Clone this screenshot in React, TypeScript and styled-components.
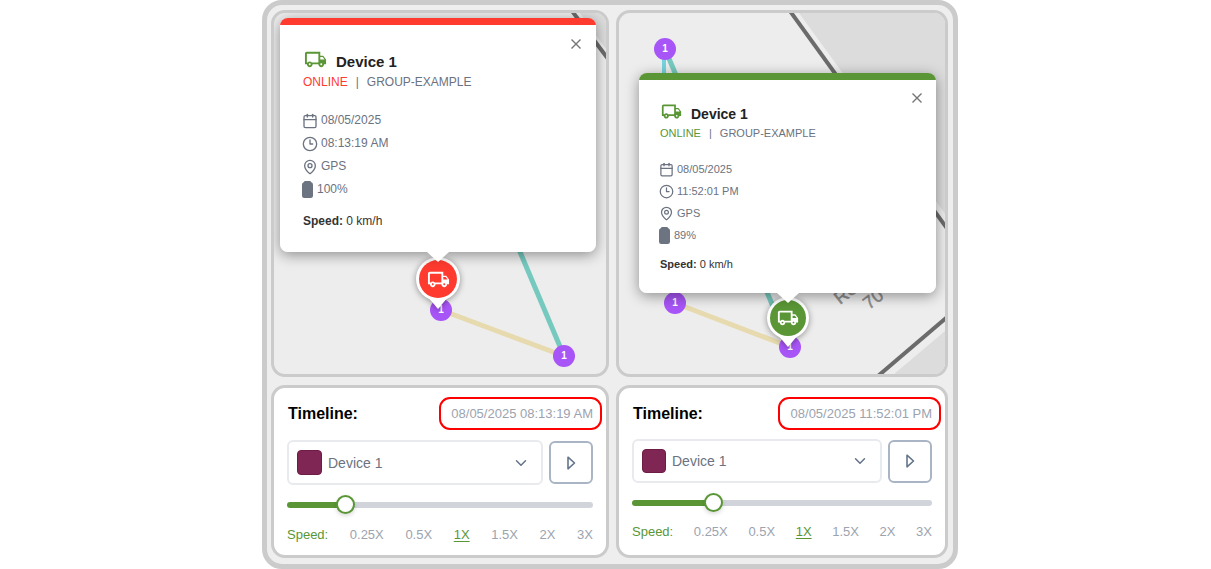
import React, { useState } from "react";
import styled, { createGlobalStyle, css } from "styled-components";
import { Calendar, ChevronDown, Clock3, MapPin } from "lucide-react";
import { MdOutlineLocalShipping } from "react-icons/md";

const RED = "#ff3b30";
const GREEN = "#5a9636";
const SLATE = "#6b7280";

const GlobalStyle = createGlobalStyle`
  * { box-sizing: border-box; }
  body {
    margin: 0;
    background: #fff;
    font-family: "Liberation Sans", Arial, sans-serif;
  }
  button, select { font-family: inherit; }
`;

const Page = styled.main`
  display: flex;
  justify-content: center;
  padding-left: 9px;
`;

const Frame = styled.div`
  flex: 1;
  max-width: 696px;
  display: grid;
  grid-template-columns: 338fr 332fr;
  gap: 8px 7px;
  padding: 5px 5px 6px 4px;
  background: #eeeeee;
  border: 5px solid #cbcbcb;
  border-radius: 20px;
`;

const card = css`
  border: 3px solid #cbcbcb;
  border-radius: 14px;
  overflow: hidden;
`;

const MapCard = styled.section`
  ${card}
  position: relative;
  min-height: 367px;
  background: #ededed;
`;

const MapArt = styled.svg`
  position: absolute;
  inset: 0;
  width: 100%;
  height: 100%;
`;

const Point = styled.span<{ $x: number; $y: number }>`
  position: absolute;
  left: ${(p) => p.$x - 11}px;
  top: ${(p) => p.$y - 11}px;
  width: 22px;
  height: 22px;
  border-radius: 50%;
  background: #a855f7;
  color: #fff;
  font-size: 10px;
  font-weight: 700;
  line-height: 21px;
  text-align: center;
`;

const PinBox = styled.div<{ $x: number; $y: number }>`
  position: absolute;
  left: ${(p) => p.$x - 30}px;
  top: ${(p) => p.$y - 30}px;
  width: 60px;
  height: 60px;
  display: grid;
  place-items: center;
  color: #fff;
  filter: drop-shadow(0 1px 3px rgba(0, 0, 0, 0.4));

  > * { grid-area: 1 / 1; }
`;

const Popup = styled.article<{ $x: number; $y: number; $w: number; $tip: number; $accent: string; $pad: string }>`
  position: absolute;
  left: ${(p) => p.$x}px;
  top: ${(p) => p.$y}px;
  width: ${(p) => p.$w}px;
  padding: ${(p) => p.$pad};
  border-radius: 8px;
  background: linear-gradient(${(p) => p.$accent} 7px, #fff 7px);
  box-shadow: 0 3px 14px rgba(0, 0, 0, 0.4);

  &::after {
    content: "";
    position: absolute;
    top: 100%;
    left: ${(p) => p.$tip - 11}px;
    border: 11px solid transparent;
    border-top: 10px solid #fff;
    border-bottom: 0;
  }
`;

const CloseButton = styled.button<{ $compact: boolean }>`
  position: absolute;
  top: ${(p) => (p.$compact ? 17 : 18)}px;
  right: ${(p) => (p.$compact ? 11 : 12)}px;
  width: 16px;
  height: 16px;
  padding: 0;
  display: grid;
  place-items: center;
  border: 0;
  background: none;
  color: #757575;
`;

const TitleRow = styled.header<{ $h: number }>`
  display: flex;
  gap: 9px;
  height: ${(p) => p.$h}px;
  padding-left: 1px;
  color: ${GREEN};
`;

const DeviceName = styled.h2<{ $size: number }>`
  align-self: flex-end;
  margin: 0;
  color: #222;
  font-size: ${(p) => p.$size}px;
  line-height: 18px;
`;

const Meta = styled.p<{ $size: number; $top: number }>`
  display: flex;
  gap: 8px;
  margin: ${(p) => p.$top}px 0 0;
  color: ${SLATE};
  font-size: ${(p) => p.$size}px;
  line-height: 16px;
`;

const Status = styled.span<{ $accent: string }>`
  color: ${(p) => p.$accent};
`;

const Details = styled.ul<{ $size: number; $row: number; $top: number }>`
  list-style: none;
  margin: ${(p) => p.$top}px 0 0 -1px;
  padding: 0;
  color: ${SLATE};
  font-size: ${(p) => p.$size}px;
  line-height: ${(p) => p.$row}px;
`;

const Detail = styled.li`
  display: flex;
  align-items: center;
  gap: 3px;
`;

const SpeedLine = styled.p<{ $size: number; $top: number }>`
  margin: ${(p) => p.$top}px 0 0;
  color: #333;
  font-size: ${(p) => p.$size}px;
  line-height: 16px;
`;

const TimelineCard = styled.section`
  ${card}
  display: flex;
  flex-direction: column;
  padding: 9px 13px 12px;
  background: #fff;
`;

const TimelineHeader = styled.header`
  display: flex;
  justify-content: space-between;
  align-items: center;
  margin-right: -9px;
  padding-left: 1px;
`;

const TimelineTitle = styled.h3`
  margin: 0;
  font-size: 16px;
  line-height: 20px;
  color: #000;
`;

const Stamp = styled.time`
  width: 163px;
  padding-right: 7px;
  border: 2px solid #f00;
  border-radius: 11px;
  color: #9ca3af;
  font-size: 13px;
  line-height: 29px;
  text-align: right;
  white-space: nowrap;
`;

const Controls = styled.div<{ $compact: boolean }>`
  display: flex;
  align-items: center;
  gap: 6px;
  margin-top: ${(p) => (p.$compact ? 9 : 10)}px;
  height: ${(p) => (p.$compact ? 44 : 45)}px;
`;

const SelectBox = styled.label`
  flex: 1;
  align-self: stretch;
  display: flex;
  align-items: center;
  gap: 6px;
  padding: 0 11px 0 8px;
  border: 2px solid #e8eaee;
  border-radius: 6px;
  color: #64748b;
`;

const Swatch = styled.span<{ $compact: boolean }>`
  width: ${(p) => (p.$compact ? 24 : 25)}px;
  height: ${(p) => (p.$compact ? 24 : 25)}px;
  border: 1px solid #6d1c47;
  border-radius: 4px;
  background: #802654;
`;

const DeviceSelect = styled.select`
  flex: 1;
  min-width: 0;
  padding: 0;
  border: 0;
  appearance: none;
  background: none;
  color: ${SLATE};
  font-size: 14px;
`;

const PlayButton = styled.button`
  width: 44px;
  height: 43px;
  padding: 0;
  display: grid;
  place-items: center;
  border: 2px solid #a9b4c4;
  border-radius: 6px;
  background: #fff;
  color: #64748b;
`;

const Slider = styled.input`
  appearance: none;
  width: 100%;
  height: 20px;
  margin: 10px 0 0;
  background: none;

  &::-webkit-slider-runnable-track {
    height: 6px;
    border-radius: 3px;
    background: linear-gradient(to right, ${GREEN} var(--fill), #d1d5db var(--fill));
  }

  &::-webkit-slider-thumb {
    appearance: none;
    width: 19px;
    height: 19px;
    margin-top: -7px;
    border: 2px solid ${GREEN};
    border-radius: 50%;
    background: #fff;
    box-shadow: 0 2px 4px rgba(0, 0, 0, 0.15);
  }
`;

const Speeds = styled.div<{ $compact: boolean }>`
  display: flex;
  justify-content: space-between;
  margin-top: ${(p) => (p.$compact ? 11 : 12)}px;
  color: ${GREEN};
  font-size: 13px;
  line-height: 16px;
`;

const SpeedButton = styled.button<{ $active: boolean }>`
  padding: 0;
  border: 0;
  background: none;
  color: ${(p) => (p.$active ? GREEN : "#9ca3af")};
  font-size: 13px;
  line-height: 16px;
  text-decoration: ${(p) => (p.$active ? "underline" : "none")};
  text-underline-offset: 2px;
`;

function Battery() {
  return (
    <svg width="12" height="17" viewBox="0 0 12 17" aria-hidden="true">
      <path
        d="M3.500 0h4q1.300 0 1.800 1.300q1.700 .5 1.700 2.400v11q0 2.300-2.300 2.300h-6.400q-2.300 0-2.300-2.300v-11q0-1.900 1.700-2.400q.5-1.300 1.800-1.300z"
        fill="#6b7480"
      />
    </svg>
  );
}

function Pin({ x, y, r, color }: { x: number; y: number; r: number; color: string }) {
  return (
    <PinBox $x={x} $y={y}>
      <svg width="60" height="60" viewBox="0 0 60 60" aria-hidden="true">
        <circle cx="30" cy="30" r={r} fill="#fff" />
        <path d={`M20 ${r + 26}L30 ${r + 38}L40 ${r + 26}z`} fill="#fff" />
        <circle cx="30" cy="30" r={r - 3} fill={color} />
      </svg>
      <MdOutlineLocalShipping size={r + 1} />
    </PinBox>
  );
}

interface DeviceView {
  date: string;
  time: string;
  battery: string;
  accent: string;
  compact: boolean;
  x: number;
  y: number;
  width: number;
  tip: number;
}

function DevicePopup({ view }: { view: DeviceView }) {
  const { compact, accent } = view;
  const text = compact ? 11 : 12;
  const icon = compact ? 15 : 16;
  return (
    <Popup
      $x={view.x}
      $y={view.y}
      $w={view.width}
      $tip={view.tip}
      $accent={accent}
      $pad={compact ? "28px 21px 21px" : "30px 23px 23px"}
    >
      <CloseButton type="button" aria-label="Close" $compact={compact}>
        <svg width="10" height="10" viewBox="0 0 10 10" stroke="currentColor" strokeWidth="1.4">
          <path d="M0.5 0.5L9.5 9.5M9.5 0.5L0.5 9.5" />
        </svg>
      </CloseButton>
      <TitleRow $h={compact ? 22 : 23}>
        <MdOutlineLocalShipping size={compact ? 21 : 23} />
        <DeviceName $size={compact ? 14 : 15}>Device 1</DeviceName>
      </TitleRow>
      <Meta $size={text} $top={compact ? 2 : 3}>
        <Status $accent={accent}>ONLINE</Status>
        <span>|</span>
        <span>GROUP-EXAMPLE</span>
      </Meta>
      <Details $size={text} $row={compact ? 22 : 23} $top={compact ? 17 : 19}>
        <Detail><Calendar size={icon} />{view.date}</Detail>
        <Detail><Clock3 size={icon} />{view.time}</Detail>
        <Detail><MapPin size={icon} />GPS</Detail>
        <Detail><Battery />{view.battery}</Detail>
      </Details>
      <SpeedLine $size={text} $top={compact ? 10 : 12}>
        <strong>Speed:</strong> 0 km/h
      </SpeedLine>
    </Popup>
  );
}

const SPEEDS = ["0.25X", "0.5X", "1X", "1.5X", "2X", "3X"];

function Timeline({ stamp, start, compact }: { stamp: string; start: number; compact: boolean }) {
  const [value, setValue] = useState(start);
  const [speed, setSpeed] = useState("1X");
  return (
    <TimelineCard>
      <TimelineHeader>
        <TimelineTitle>Timeline:</TimelineTitle>
        <Stamp>{stamp}</Stamp>
      </TimelineHeader>
      <Controls $compact={compact}>
        <SelectBox>
          <Swatch $compact={compact} />
          <DeviceSelect aria-label="Device">
            <option>Device 1</option>
          </DeviceSelect>
          <ChevronDown size={18} strokeWidth={2} />
        </SelectBox>
        <PlayButton type="button" aria-label="Play">
          <svg width="10" height="14" viewBox="0 0 10 14" fill="none" stroke="currentColor" strokeWidth="1.6" strokeLinejoin="round">
            <path d="M2 1.2L8.5 7L2 12.800z" />
          </svg>
        </PlayButton>
      </Controls>
      <Slider
        type="range"
        aria-label="Timeline position"
        min={0}
        max={1000}
        value={value}
        onChange={(e) => setValue(Number(e.target.value))}
        style={{ "--fill": `${value / 10}%` } as React.CSSProperties}
      />
      <Speeds $compact={compact} role="group" aria-label="Playback speed">
        <span>Speed:</span>
        {SPEEDS.map((s) => (
          <SpeedButton key={s} type="button" $active={s === speed} onClick={() => setSpeed(s)}>
            {s}
          </SpeedButton>
        ))}
      </Speeds>
    </TimelineCard>
  );
}

const morning: DeviceView = {
  date: "08/05/2025", time: "08:13:19 AM", battery: "100%", accent: RED,
  compact: false, x: 6, y: 5, width: 316, tip: 158,
};

const night: DeviceView = {
  date: "08/05/2025", time: "11:52:01 PM", battery: "89%", accent: GREEN,
  compact: true, x: 20, y: 60, width: 297, tip: 149,
};

export default function App() {
  return (
    <>
      <GlobalStyle />
      <Page>
        <Frame>
          <MapCard aria-label="Map, morning">
            <MapArt aria-hidden="true">
              <path d="M306 0L420 158V0z" fill="#dcdcdc" />
              <path d="M298 -2L420 160" stroke="#6b6b6b" strokeWidth="4" />
              <path d="M167 297L290 343" stroke="#e6daae" strokeWidth="5" />
              <path d="M178 78L290 343" stroke="#76c9bf" strokeWidth="5" />
            </MapArt>
            <Point $x={167} $y={297}>1</Point>
            <Point $x={290} $y={343}>1</Point>
            <Pin x={164} y={266} r={22} color={RED} />
            <DevicePopup view={morning} />
          </MapCard>

          <MapCard aria-label="Map, night">
            <MapArt aria-hidden="true">
              <path d="M180 0L340 220V0z" fill="#dcdcdc" />
              <path d="M171 -2L340 232" stroke="#6b6b6b" strokeWidth="4" />
              <path d="M274 362L340 306V362z" fill="#dcdcdc" />
              <path d="M259 363L340 294" stroke="#6b6b6b" strokeWidth="4" />
              <g fill="#8c8c8c" stroke="#8c8c8c" strokeWidth="0.5" fontSize="18" fontFamily="Liberation Sans">
                <text transform="translate(221 292) rotate(-38)">Ro</text>
                <text transform="translate(250 297) rotate(-38)">70</text>
              </g>
              <path d="M45 36V280" stroke="#74d3de" strokeWidth="4" />
              <path d="M46 36L171 334" stroke="#76c9bf" strokeWidth="5" />
              <path d="M56 290L171 334" stroke="#e6daae" strokeWidth="5" />
            </MapArt>
            <Point $x={46} $y={36}>1</Point>
            <Point $x={56} $y={290}>1</Point>
            <Point $x={171} $y={334}>1</Point>
            <Pin x={169} y={305} r={21} color={GREEN} />
            <DevicePopup view={night} />
          </MapCard>

          <Timeline stamp="08/05/2025 08:13:19 AM" start={169} compact={false} />
          <Timeline stamp="08/05/2025 11:52:01 PM" start={258} compact />
        </Frame>
      </Page>
    </>
  );
}
